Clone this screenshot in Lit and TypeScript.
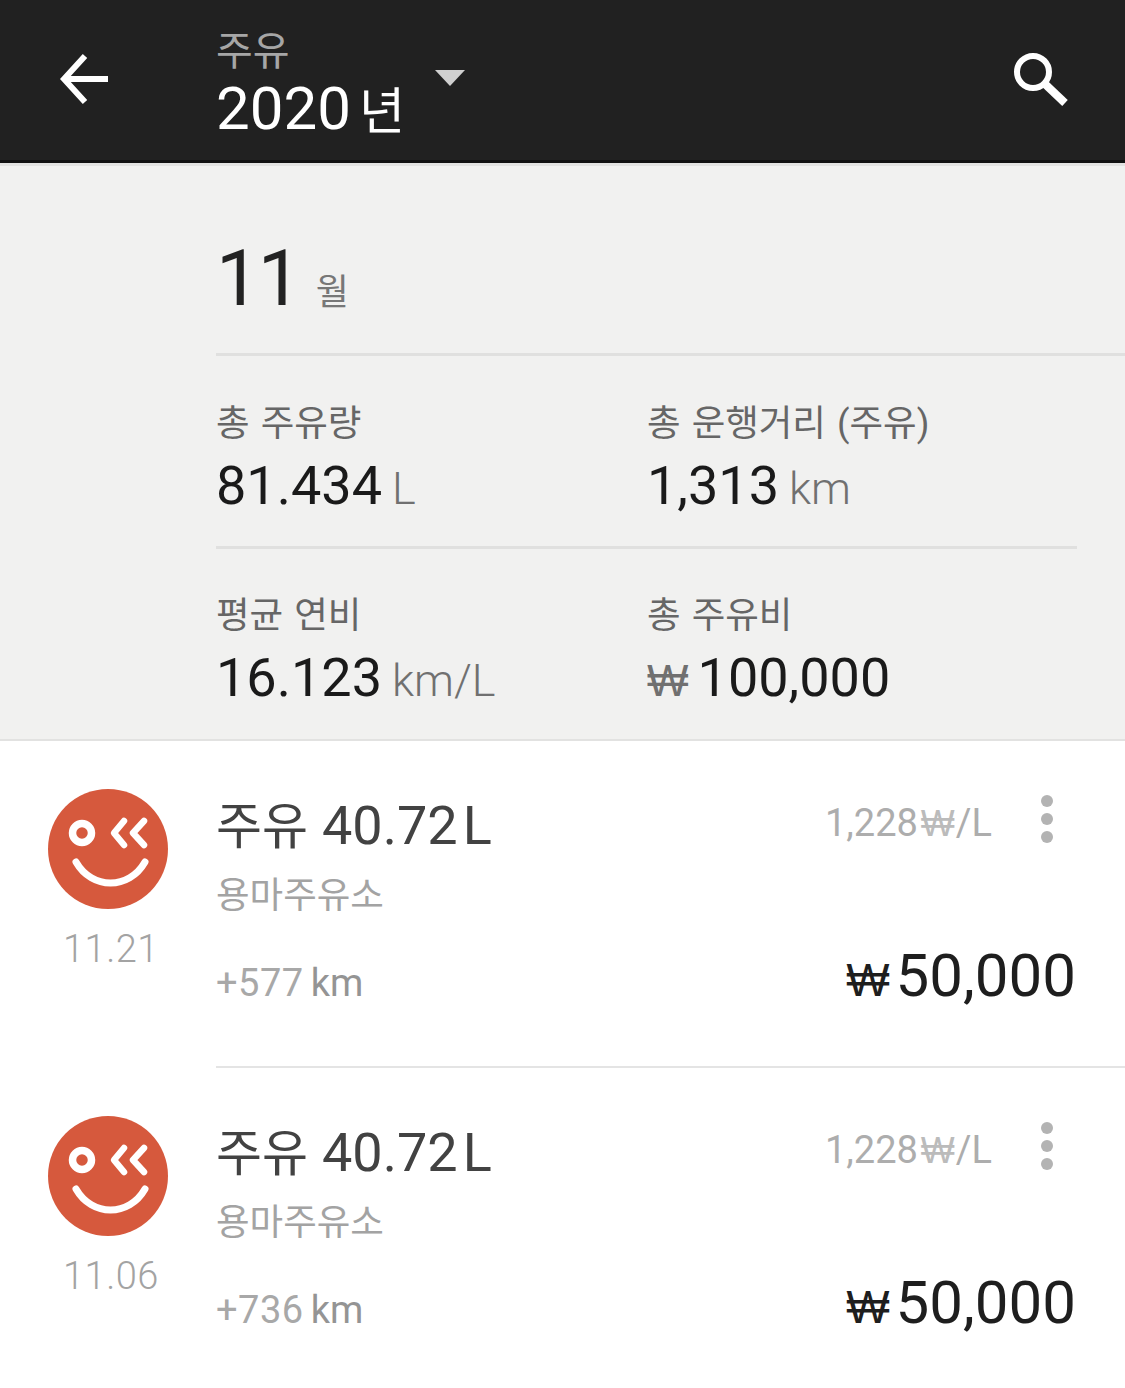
import { LitElement, html, css, svg } from 'lit';
import { customElement } from 'lit/decorators.js';

const entries = [
  { date: '11.21', distance: '+577', liters: '40.72', station: '용마주유소', unit: '1,228', total: '50,000' },
  { date: '11.06', distance: '+736', liters: '40.72', station: '용마주유소', unit: '1,228', total: '50,000' },
];

const logo = svg`
  <svg class="logo" viewBox="0 0 120 120" width="120" height="120">
    <circle cx="60" cy="60" r="60" fill="#d6593d"></circle>
    <g fill="none" stroke="#fff" stroke-linecap="round" stroke-linejoin="round">
      <circle cx="34" cy="44" r="9.5" stroke-width="7.5"></circle>
      <path d="M76 32 L66 44 L76 56" stroke-width="6.5"></path>
      <path d="M96 32 L85 44 L96 56" stroke-width="6.5"></path>
      <path d="M28 73 C44 101 81 101 97 73" stroke-width="7"></path>
    </g>
  </svg>
`;

@customElement('app-root')
export class AppRoot extends LitElement {
  static styles = css`
    :host {
      display: block;
      width: 1125px;
      height: 1388px;
      overflow: hidden;
      background: #fff;
      font-family: Roboto, "Noto Sans CJK KR", sans-serif;
    }

    .won { font-family: "Open Sans", sans-serif; font-weight: 400; }

    .appbar {
      height: 163px;
      box-sizing: border-box;
      background: #212121;
      border-bottom: 3px solid #111;
      box-shadow: 0 3px 0 #e2e2e1;
      display: flex;
      position: relative;
      z-index: 1;
    }
    .back { width: 216px; padding: 53px 0 0 60px; box-sizing: border-box; }
    .heading { flex: 1; padding-top: 27px; }
    .heading-sub { font-size: 40px; line-height: 49px; color: #a6a6a6; }
    .heading-year { font-size: 60px; line-height: 66px; color: #fff; display: flex; align-items: baseline; }
    .heading-year .nen { font-size: 50px; margin-left: 8px; }
    .caret {
      position: absolute;
      left: 435px;
      top: 70px;
      width: 0;
      height: 0;
      border-left: 15px solid transparent;
      border-right: 15px solid transparent;
      border-top: 16px solid #d0d0d0;
    }
    .search { padding: 52px 56px 0 0; }

    .summary {
      height: 576px;
      background: #f1f1f0;
      border-bottom: 2px solid #e2e2e1;
      padding-left: 216px;
    }
    .month {
      height: 193px;
      box-sizing: border-box;
      border-bottom: 3px solid #e0e0df;
      display: flex;
      align-items: baseline;
      padding-top: 72px;
      color: #222;
    }
    .month-num { font-size: 78px; line-height: 88px; letter-spacing: -2px; }
    .month-unit { font-size: 36px; color: #777; margin-left: 16px; }

    .stats {
      display: grid;
      grid-template-columns: 431px 430px;
      height: 193px;
      box-sizing: border-box;
      padding-top: 47px;
    }
    .stats.first { border-bottom: 3px solid #e0e0df; width: 861px; padding-top: 48px; }
    .stat-label { font-size: 36.5px; line-height: 40px; color: #666; word-spacing: 2px; }
    .stat-value { font-size: 54px; line-height: 64px; color: #1a1a1a; margin-top: 10px; }
    .stat-unit { font-size: 45px; color: #707070; font-weight: 300; margin-left: 10px; }
    .stat-won { font-size: 44px; color: #707070; margin-right: 9px; }

    .entry {
      height: 327px;
      box-sizing: border-box;
      display: grid;
      grid-template-columns: 216px 1fr;
    }
    .entry-left { padding: 48px 0 0 48px; }
    .logo { display: block; }
    .entry-date { font-size: 38px; line-height: 44px; color: #a3a3a3; margin-top: 18px; padding-left: 15px; font-weight: 300; letter-spacing: 0.5px; }
    .entry-main {
      border-bottom: 2px solid #e4e4e4;
      padding: 51px 49px 0 0;
      display: flex;
      justify-content: space-between;
    }
    .entry:last-child .entry-main { border-bottom: none; }

    .entry-title { font-size: 54px; line-height: 68px; color: #424242; display: flex; align-items: baseline; }
    .entry-title .fill { font-size: 50px; margin-right: 14px; }
    .entry-title .lu { margin-left: 5px; }
    .entry-station { font-size: 36.5px; line-height: 44px; color: #a3a3a3; margin-top: 13px; }
    .entry-dist { font-size: 38px; line-height: 44px; color: #a8a8a8; margin-top: 43px; letter-spacing: 0.5px; }
    .entry-dist .km { color: #949494; margin-left: 7px; letter-spacing: 0; }

    .entry-side { display: flex; flex-direction: column; align-items: flex-end; }
    .entry-top { display: flex; align-items: flex-start; }
    .entry-unit { font-size: 38px; line-height: 44px; color: #adadad; margin-top: 9px; }
    .entry-unit .won { font-size: 36px; color: #bbb; margin: 0 1px 0 3px; }
    .dots { display: flex; flex-direction: column; gap: 6px; margin: 3px 23px 0 49px; }
    .dots i { display: block; width: 12px; height: 12px; border-radius: 50%; background: #b3b3b3; }
    .entry-total { font-size: 60px; line-height: 70px; color: #1e1e1e; margin-top: 96px; }
    .entry-total .won { font-size: 46px; margin-right: 6px; }
  `;

  render() {
    return html`
      <header class="appbar">
        <div class="back">
          <svg width="52" height="52" viewBox="0 0 52 52">
            <path d="M25 3 L4 26 L25 49 M4 26 H48" fill="none" stroke="#fff" stroke-width="6"></path>
          </svg>
        </div>
        <div class="heading">
          <div class="heading-sub">주유</div>
          <div class="heading-year">2020<span class="nen">년</span></div>
        </div>
        <div class="caret"></div>
        <div class="search">
          <svg width="56" height="56" viewBox="0 0 56 56">
            <circle cx="20" cy="20" r="16" fill="none" stroke="#fff" stroke-width="6"></circle>
            <path d="M32 32 L52 51" fill="none" stroke="#fff" stroke-width="8"></path>
          </svg>
        </div>
      </header>

      <section class="summary">
        <div class="month"><span class="month-num">11</span><span class="month-unit">월</span></div>
        <div class="stats first">
          <div>
            <div class="stat-label">총 주유량</div>
            <div class="stat-value">81.434<span class="stat-unit">L</span></div>
          </div>
          <div>
            <div class="stat-label">총 운행거리 (주유)</div>
            <div class="stat-value">1,313<span class="stat-unit">km</span></div>
          </div>
        </div>
        <div class="stats">
          <div>
            <div class="stat-label">평균 연비</div>
            <div class="stat-value">16.123<span class="stat-unit">km/L</span></div>
          </div>
          <div>
            <div class="stat-label">총 주유비</div>
            <div class="stat-value"><span class="won stat-won">₩</span>100,000</div>
          </div>
        </div>
      </section>

      ${entries.map(e => html`
        <div class="entry">
          <div class="entry-left">
            ${logo}
            <div class="entry-date">${e.date}</div>
          </div>
          <div class="entry-main">
            <div>
              <div class="entry-title"><span class="fill">주유</span>${e.liters}<span class="lu">L</span></div>
              <div class="entry-station">${e.station}</div>
              <div class="entry-dist">${e.distance}<span class="km">km</span></div>
            </div>
            <div class="entry-side">
              <div class="entry-top">
                <div class="entry-unit">${e.unit}<span class="won">₩</span>/L</div>
                <div class="dots"><i></i><i></i><i></i></div>
              </div>
              <div class="entry-total"><span class="won">₩</span>${e.total}</div>
            </div>
          </div>
        </div>
      `)}
    `;
  }
}
